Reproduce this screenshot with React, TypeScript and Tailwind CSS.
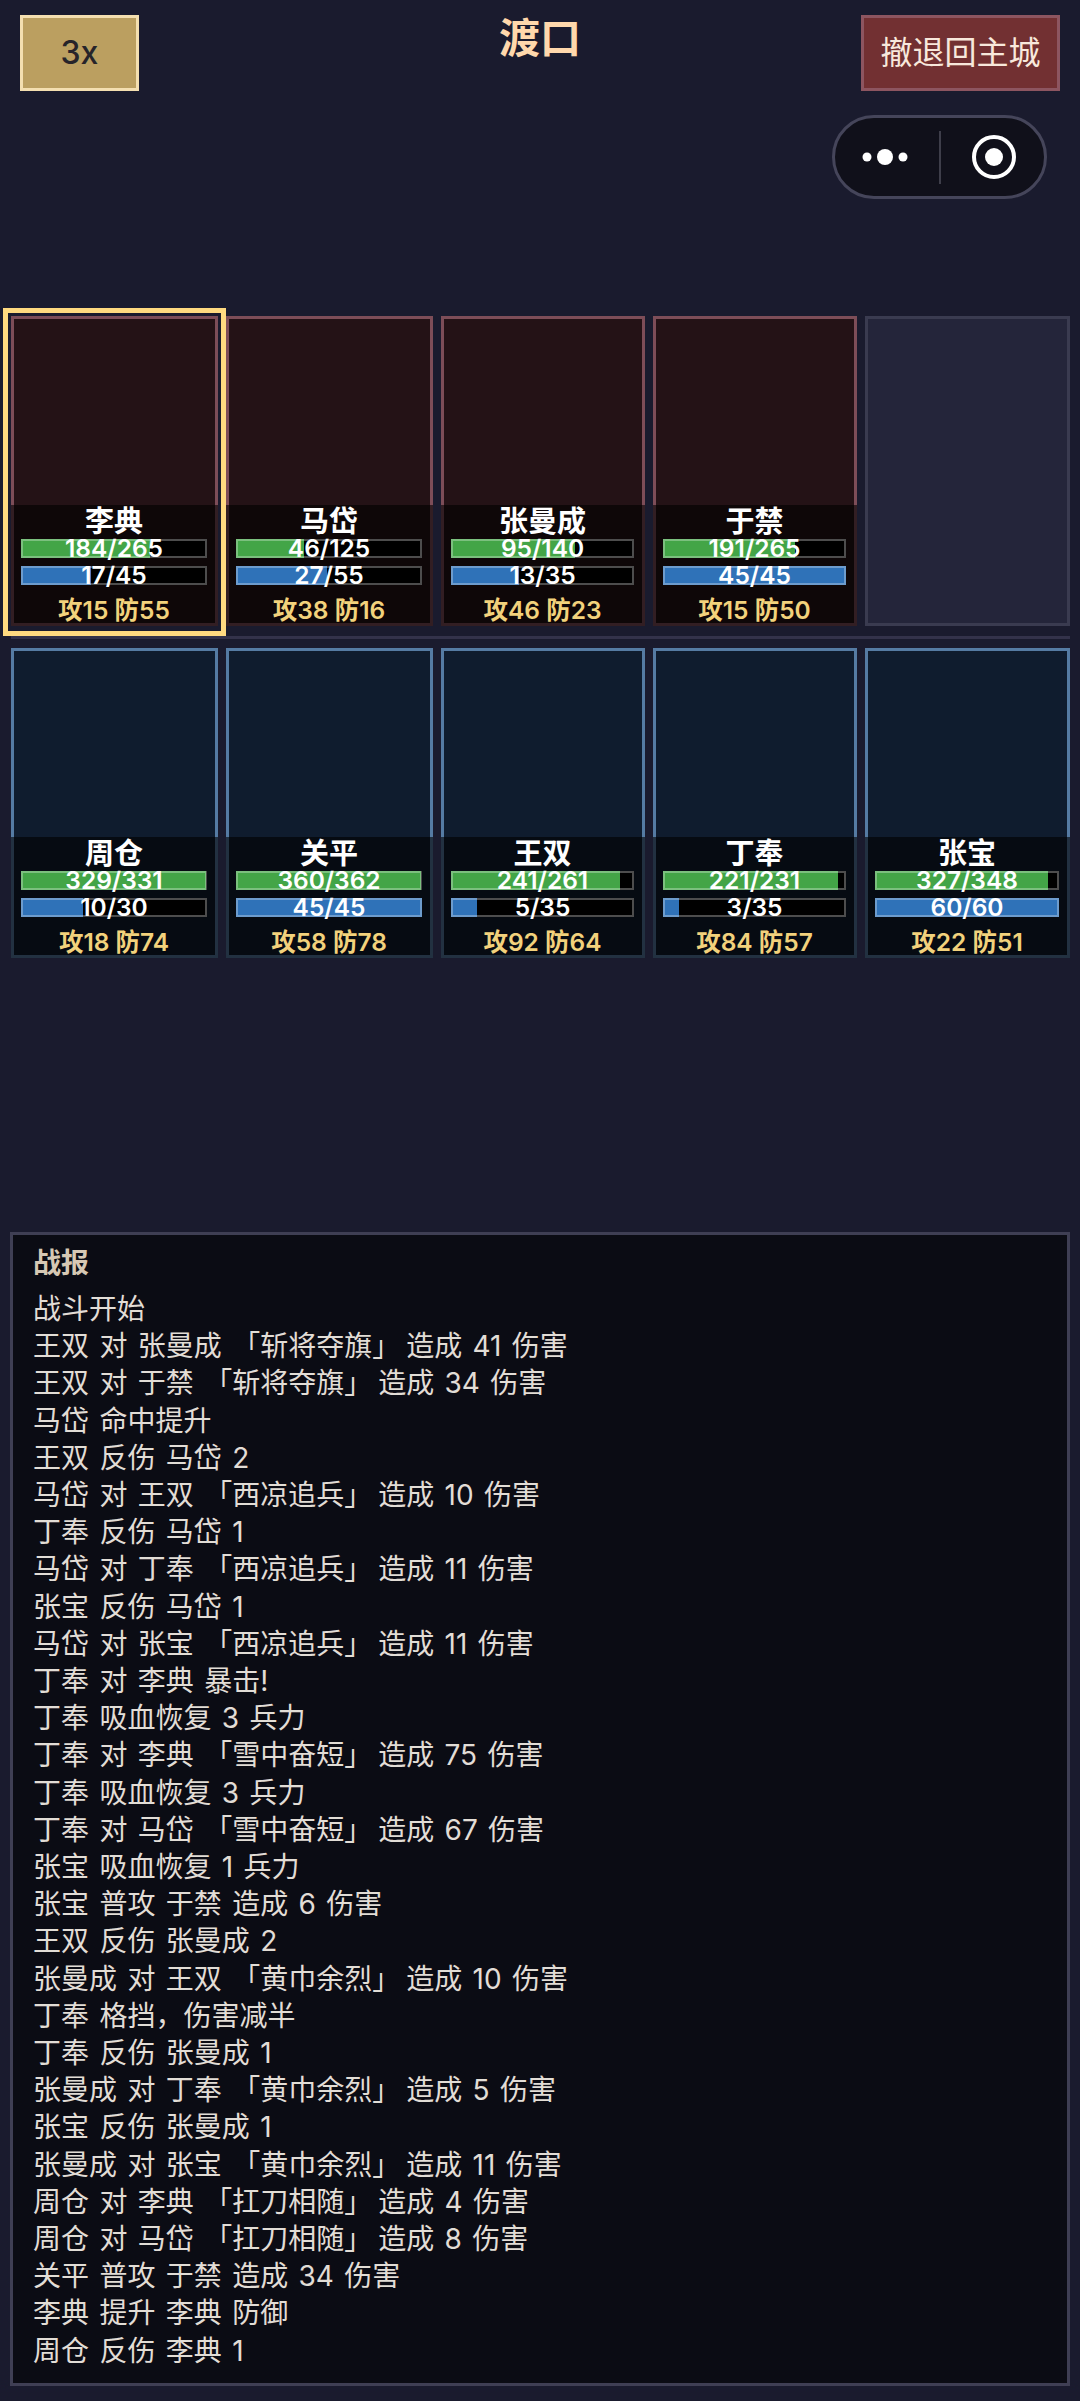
const enemies = [
  { name: "李典", hp: 184, maxHp: 265, mp: 17, maxMp: 45, atk: 15, def: 55, selected: true },
  { name: "马岱", hp: 46, maxHp: 125, mp: 27, maxMp: 55, atk: 38, def: 16 },
  { name: "张曼成", hp: 95, maxHp: 140, mp: 13, maxMp: 35, atk: 46, def: 23 },
  { name: "于禁", hp: 191, maxHp: 265, mp: 45, maxMp: 45, atk: 15, def: 50 },
];

const allies = [
  { name: "周仓", hp: 329, maxHp: 331, mp: 10, maxMp: 30, atk: 18, def: 74 },
  { name: "关平", hp: 360, maxHp: 362, mp: 45, maxMp: 45, atk: 58, def: 78 },
  { name: "王双", hp: 241, maxHp: 261, mp: 5, maxMp: 35, atk: 92, def: 64 },
  { name: "丁奉", hp: 221, maxHp: 231, mp: 3, maxMp: 35, atk: 84, def: 57 },
  { name: "张宝", hp: 327, maxHp: 348, mp: 60, maxMp: 60, atk: 22, def: 51 },
];

const logs = [
  "战斗开始",
  "王双 对 张曼成 「斩将夺旗」造成 41 伤害",
  "王双 对 于禁 「斩将夺旗」造成 34 伤害",
  "马岱 命中提升",
  "王双 反伤 马岱 2",
  "马岱 对 王双 「西凉追兵」造成 10 伤害",
  "丁奉 反伤 马岱 1",
  "马岱 对 丁奉 「西凉追兵」造成 11 伤害",
  "张宝 反伤 马岱 1",
  "马岱 对 张宝 「西凉追兵」造成 11 伤害",
  "丁奉 对 李典 暴击!",
  "丁奉 吸血恢复 3 兵力",
  "丁奉 对 李典 「雪中奋短」造成 75 伤害",
  "丁奉 吸血恢复 3 兵力",
  "丁奉 对 马岱 「雪中奋短」造成 67 伤害",
  "张宝 吸血恢复 1 兵力",
  "张宝 普攻 于禁 造成 6 伤害",
  "王双 反伤 张曼成 2",
  "张曼成 对 王双 「黄巾余烈」造成 10 伤害",
  "丁奉 格挡，伤害减半",
  "丁奉 反伤 张曼成 1",
  "张曼成 对 丁奉 「黄巾余烈」造成 5 伤害",
  "张宝 反伤 张曼成 1",
  "张曼成 对 张宝 「黄巾余烈」造成 11 伤害",
  "周仓 对 李典 「扛刀相随」造成 4 伤害",
  "周仓 对 马岱 「扛刀相随」造成 8 伤害",
  "关平 普攻 于禁 造成 34 伤害",
  "李典 提升 李典 防御",
  "周仓 反伤 李典 1",
];

type Unit = (typeof allies)[number] & { selected?: boolean };

function Bar({ value, max, fill }: { value: number; max: number; fill: string }) {
  return (
    <div className="relative h-[19px] bg-black">
      <div className={`absolute inset-y-0 left-0 ${fill}`} style={{ width: `${(value / max) * 100}%` }} />
      <div className="absolute inset-0 border-2 border-white/30" />
      <div className="absolute inset-0 flex items-center justify-center text-[24.5px] leading-[19px] font-semibold text-white">
        {value}/{max}
      </div>
    </div>
  );
}

function UnitCard({ unit, side }: { unit: Unit; side: "enemy" | "ally" }) {
  return (
    <div
      className={[
        "relative h-[310px] border-[3px]",
        side === "enemy" ? "border-[#7d4d58] bg-[#241216]" : "border-[#557ba3] bg-[#0f1c2e]",
      ].join(" ")}
    >
      <div className="absolute inset-x-[-3px] bottom-[-3px] flex h-[121px] flex-col bg-black/60 pr-[11px] pl-[10px]">
        <div className="text-center text-[29px] leading-[34px] font-bold text-white">{unit.name}</div>
        <div className="flex flex-col gap-[8px]">
          <Bar value={unit.hp} max={unit.maxHp} fill="bg-[#43a547]" />
          <Bar value={unit.mp} max={unit.maxMp} fill="bg-[#2f72b8]" />
        </div>
        <div className="mt-[10px] text-center text-[24.5px] leading-[30px] font-semibold text-[#f2d27c]">
          攻{unit.atk} 防{unit.def}
        </div>
      </div>
      {unit.selected && <div className="absolute top-[-11px] right-[-11px] bottom-[-13px] left-[-11px] border-[5px] border-[#ffda80]" />}
    </div>
  );
}

function LogLine({ line }: { line: string }) {
  const [head, tail] = line.split("」");
  return (
    <li className="text-[28px] leading-[37.2px] [word-spacing:2.5px] whitespace-pre text-[#e2ddd6]">
      {tail === undefined ? (
        line
      ) : (
        <>
          {head}
          <span className="mr-[6px]">」</span>
          {tail}
        </>
      )}
    </li>
  );
}

export default function App() {
  return (
    <div
      lang="zh-CN"
      className="relative flex min-h-[2401px] flex-col bg-[#1a1b2e] font-['Inter','Noto_Sans_CJK_SC',sans-serif]"
    >
      <header className="grid grid-cols-3 items-start px-[20px] pt-[15px]">
        <button
          type="button"
          className="h-[76px] w-[119px] justify-self-start border-[3px] border-[#f4dfb0] bg-[#bb9f60] text-[32px] font-medium text-[#26242a]"
        >
          3x
        </button>
        <h1 className="justify-self-center text-[41px] leading-[46px] font-bold text-[#ffd8ac]">渡口</h1>
        <button
          type="button"
          className="h-[76px] w-[199px] justify-self-end border-[3px] border-[#8d5560] bg-[#723032] text-[32px] text-[#f8e8dc]"
        >
          撤退回主城
        </button>
      </header>

      {/* wechat capsule sits on top of the page */}
      <div className="absolute top-[115px] right-[33px] h-[84px] w-[215px] rounded-full border-[3px] border-[#45455a] bg-[#10101a]">
        <svg width="209" height="78" viewBox="0 0 209 78" fill="none">
          <circle cx="32" cy="39" r="4.5" fill="#fff" />
          <circle cx="50" cy="39" r="8" fill="#fff" />
          <circle cx="68" cy="39" r="4.5" fill="#fff" />
          <rect x="104" y="13" width="2" height="53" fill="#3e3e4a" />
          <circle cx="159" cy="39" r="20" stroke="#fff" strokeWidth="4" />
          <circle cx="159" cy="39" r="9" fill="#fff" />
        </svg>
      </div>

      <section className="mt-[225px] grid grid-cols-[207px_207px_204px_204px_205px] gap-x-[8px] pl-[11px]">
        {enemies.map((unit) => (
          <UnitCard key={unit.name} unit={unit} side="enemy" />
        ))}
        <div className="h-[310px] border-[3px] border-[#3a3b50] bg-[#24253a]" />
      </section>

      <div className="mt-[10px] mr-[10px] ml-[11px] h-[3px] bg-[#33324a]" />

      <section className="mt-[9px] grid grid-cols-[207px_207px_204px_204px_205px] gap-x-[8px] pl-[11px]">
        {allies.map((unit) => (
          <UnitCard key={unit.name} unit={unit} side="ally" />
        ))}
      </section>

      <section className="mx-[10px] mt-[274px] h-[1154px] border-[3px] border-[#3f3f54] bg-[#0b0c14] pt-[8px] pr-[20px] pl-[20px]">
        <h2 className="text-[28px] leading-[40px] font-bold text-[#d6c8b4]">战报</h2>
        <ul className="mt-[8px]">
          {logs.map((line, i) => (
            <LogLine key={i} line={line} />
          ))}
        </ul>
      </section>
    </div>
  );
}
